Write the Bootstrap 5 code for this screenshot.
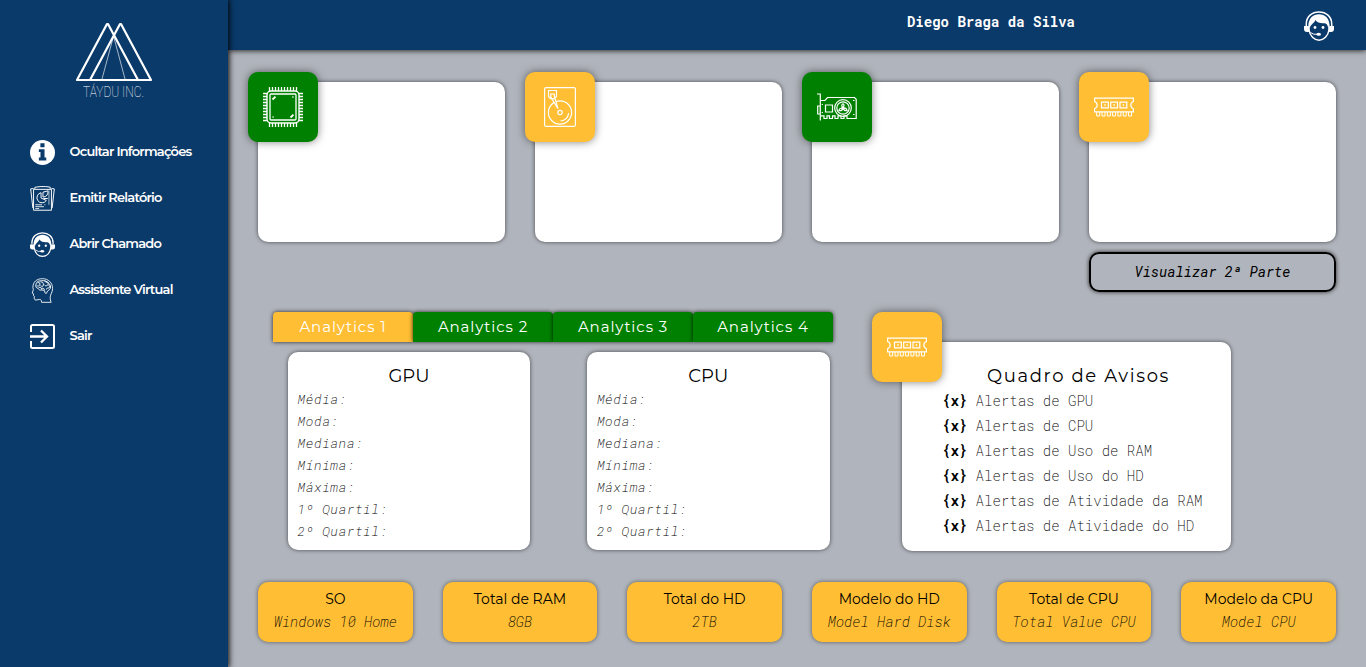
<!DOCTYPE html>
<html lang="pt-BR">
<head>
<meta charset="utf-8">
<meta name="viewport" content="width=device-width, initial-scale=1">
<title>Táydu Inc.</title>
<link href="https://cdn.jsdelivr.net/npm/bootstrap@5.3.0/dist/css/bootstrap.min.css" rel="stylesheet">
<style>
:root{--navy:#0a3a6a;--amber:#ffbe33;--leaf:#008000}
body{background:#b0b4bc;color:#000;font-family:"Montserrat","Inter",sans-serif;height:667px;overflow:hidden}
svg{display:block;fill:none;stroke:currentColor;overflow:visible}
.mono{font-family:"Roboto Mono","Liberation Mono",monospace}
.side{width:228px;background:var(--navy);box-shadow:0 0 6px 1px #000;z-index:3}
.brand{height:129px;padding-top:20px;color:#fff}
.side .nav-link{height:46px;padding:1px 0 0 30px;gap:14.5px;color:#fff;font-size:13px;font-weight:600;letter-spacing:-.8px}
.side .nav-link span{padding-bottom:2px}
.topbar{height:50px;background:var(--navy);box-shadow:0 0 6px #000;padding:2px 32px 0 0;z-index:2}
.user{font-size:14px;font-weight:700;margin-right:229px;margin-top:-9px}
.board{padding:32px 30px 0}
.panel{background:#fff;border-radius:10px;box-shadow:0 0 4px rgba(0,0,0,.6)}
.metric{height:160px}
.chip{width:70px;height:70px;border-radius:10px;color:#fff;box-shadow:0 0 8px rgba(0,0,0,.5);top:-10px;left:-10px}
.bg-amber{background:var(--amber)}.bg-leaf{background:var(--leaf)}
.four{display:grid;grid-template-columns:repeat(4,1fr);gap:10px 30px}
.more{grid-column:4;height:40px;border:2px solid #000;border-radius:10px;font-size:14px;font-style:italic;box-shadow:0 0 4px rgba(0,0,0,.8);padding:0 0 2px;background:none;color:#000}
.middle{height:240px;margin-top:20px}
.analytics{width:560px;margin-left:15px}
.tab{width:140px;height:30px;border:0;border-radius:4px 4px 0 0;color:#fff;font-size:15px;letter-spacing:.9px;box-shadow:0 0 4px rgba(0,0,0,.8);padding:0}
.stat-row{padding:10px 3.4px 0 14.6px}
.stats{width:242.7px;height:198px;padding:11px 10px 0}
.panel h2{font-size:18px;line-height:26px;margin:0;font-weight:400;text-align:center}
.panel ul{margin-top:-1px}
.stats li{font-size:13px;letter-spacing:.56px;line-height:22px;font-style:italic;font-weight:200}
.notice{width:329px;height:209px;margin:30px 0 0 69px;padding-top:21px}
.notice h2{letter-spacing:1.65px;padding-left:24px}
.notice .chip{top:-30px;left:-30px}
.notice ul{padding-left:40px}
.notice li{font-size:14px;line-height:25px;font-weight:200;white-space:pre}
.notice b{font-weight:700}
.specs{display:grid;grid-template-columns:repeat(6,1fr);gap:30px;margin-top:30px}
.spec{height:60px;background:var(--amber);border-radius:10px;box-shadow:0 0 4px rgba(0,0,0,.5);text-align:center;padding-top:6px}
.spec h3{font-size:14px;line-height:22px;font-weight:400;margin:0 0 1px}
.spec p{font-size:14px;line-height:22px;font-style:italic;font-weight:200;margin:0}
</style>
</head>
<body class="d-flex">
<svg width="0" height="0" class="position-absolute">
<defs>
<symbol id="agent" viewBox="0 0 30 30"><path d="M2.300 15V13C2.300 5.500 8 .9 15 .9s12.700 4.600 12.700 12.100v2" stroke-width="1.500"/><path d="M4.300 15.500C4.300 7.500 9 3.300 15 3.300S25.700 7.500 25.700 15.500l-1.700.5c-.5-2.500-1.800-3.800-3.600-3.800-3.400.3-7.400-.2-9-3.200C10.500 12 7 13 6 16.500z" fill="currentColor" stroke="none"/><path d="M0 15h4.500l1.300 1v5H3Q0 21 0 18zM30 15h-4.500l-1.300 1v5H27q3 0 3-3z" fill="currentColor" stroke="none"/><path d="M5 19c1 6 5 10.200 10 10.200s9-4.200 10-10.200" stroke-width="1.500"/><path d="M6.500 21.500q3 2.500 7 1.800" stroke-width="1"/><ellipse cx="14.700" cy="23.200" rx="2.300" ry="1.500" fill="currentColor" stroke="none"/><circle cx="11" cy="16.500" r="1.400" fill="currentColor" stroke="none"/><circle cx="19" cy="16.500" r="1.400" fill="currentColor" stroke="none"/></symbol>
<symbol id="ram" viewBox="0 0 40 20"><path d="M.6 1.100h38.800v3.400a3.800 3.800 0 0 0 0 7.200v3.200H.6v-3.200a3.800 3.800 0 0 0 0-7.200z" stroke-width="1.200"/><path d="M7.500 5.200h6.800v5.600H7.500zM16.700 5.200h6.800v5.600h-6.800zM26 5.200h6.800v5.600H26z" stroke-width="1.200"/><path d="M10.200 8h1.500M19.400 8h1.500M28.700 8h1.500" stroke-width="1.500"/><path d="M2.700 15v4h3v-4m2.300 0v4h3v-4m2.300 0v4h3v-4m2.300 0v4h3v-4m2.300 0v4h3v-4m2.300 0v4h3v-4m2.300 0v4h3v-4" stroke-width="1"/></symbol>
</defs>
</svg>

<aside class="side vh-100 flex-shrink-0 position-relative">
<div class="brand">
<svg width="80" height="82" viewBox="0 0 80 82" class="mx-auto" stroke-linejoin="round">
<path d="M33 4L3 60H64L34 4zM46 4L16 60H77L47 4z" stroke-width="2.200"/><path d="M39.300 17L28 59M39.800 17L51 59" stroke-width=".8" opacity=".8"/>
<text x="9" y="77" textLength="61" lengthAdjust="spacingAndGlyphs" fill="#fff" stroke="none" font-family="Roboto" font-weight="100" font-size="14.500">TÁYDU INC.</text>
</svg>
</div>
<nav class="nav flex-column flex-nowrap">
<a class="nav-link d-flex align-items-center" href="#"><svg width="25" height="25" viewBox="0 0 26 26"><circle cx="13" cy="13" r="13" fill="#fff" stroke="none"/><path d="M10.800 3.500h4.300v4h-4.300zM9.200 9.500h5.900v8.700h1.800v3H9.200v-3h1.700v-5.700H9.200z" fill="#0a3a6a" stroke="none"/></svg><span>Ocultar Informações</span></a>
<a class="nav-link d-flex align-items-center" href="#"><svg width="25" height="25" viewBox="0 1 26 26"><path d="M3.700 4.500h18.600v21.700H3.700zM3 24L.7 4l3-.4M23 24l2.300-20-3-.4M5 4V2.400l5.500-.8h6l4.500.6V4" stroke-width="1"/><path d="M11.500 8a5.300 5.300 0 1 0 5.500 8l-5.500-2.500zM13.500 7.500l5-1.500a5 5 0 0 1-5 6.500zM14 14h4.500" stroke-width="1"/><path d="M5.500 20.500h7M15 20.500h1M5.500 22.500h9M5.500 24.500h4" stroke-width=".9"/><path d="M19.700 5.500v15" stroke-width=".7"/></svg><span>Emitir Relatório</span></a>
<a class="nav-link d-flex align-items-center" href="#"><svg width="25" height="25"><use href="#agent"/></svg><span>Abrir Chamado</span></a>
<a class="nav-link d-flex align-items-center" href="#"><svg width="25" height="25" viewBox="0 0 26 26"><path d="M3 10C3 4 7 .7 13 .7S23.500 5 23.500 11c0 4-2.500 6-2.500 9 0 2 .2 3.500 1 5.300h-10c0-2-.5-3-2-3l-4.500.7-1.200-2 .2-2-1-1 .3-1.500-1.500-.8L3.500 12z" stroke-width=".9"/><path d="M6 8c0-3 2-5 4.500-5S15 2 18 4s4 5 3 7-3 2-3.500 4-2 1-2-.5-2-2-3-2S10 13 9 11.500 6 11 6 8zM8 5c2-1 3 1 2 2.500S7 8 7 8m4-4c2 0 3 1 3 3s-2 2-3 1m4-5c1 2 4 1 4 3s-3 3-4 1m4 0c1 1 2 2 1 3s-3 0-3 2m-8-2c2-1 3 0 3 2m0-1c2-1 3 0 3 2" stroke-width="1"/></svg><span>Assistente Virtual</span></a>
<a class="nav-link d-flex align-items-center" href="#"><svg width="25" height="25" viewBox="0 0 25 25" stroke-width="2"><path d="M1 8V2.500Q1 1 2.500 1h20Q24 1 24 2.500v20q0 1.500-1.500 1.500h-20Q1 24 1 22.500V17"/><path d="M0 12.500h17M11 6.500l6 6-6 6" stroke-width="2.300"/></svg><span>Sair</span></a>
</nav>
</aside>

<div class="flex-grow-1">
<header class="topbar d-flex align-items-center justify-content-end text-white position-relative">
<span class="user mono">Diego Braga da Silva</span>
<svg width="30" height="30"><use href="#agent"/></svg>
</header>
<main class="board">
<section class="four">
<div class="panel metric position-relative"><div class="chip bg-leaf position-absolute d-flex align-items-center justify-content-center"><svg width="40" height="40" viewBox="0 0 40 40"><rect x="4" y="4" width="32" height="32" rx="4" stroke-width="1.400"/><rect x="7" y="7" width="26" height="26" rx="1" stroke-width="1.300"/><path d="M6.500 0v4m3-4v4m3-4v4m3-4v4m3-4v4m3-4v4m3-4v4m3-4v4m3-4v4m3-4v4M6.500 36v4m3-4v4m3-4v4m3-4v4m3-4v4m3-4v4m3-4v4m3-4v4m3-4v4m3-4v4M0 6.500h4m-4 3h4m-4 3h4m-4 3h4m-4 3h4m-4 3h4m-4 3h4m-4 3h4m-4 3h4m-4 3h4M36 6.500h4m-4 3h4m-4 3h4m-4 3h4m-4 3h4m-4 3h4m-4 3h4m-4 3h4m-4 3h4m-4 3h4" stroke-width="1.300"/><path d="M9.500 12.500L12.500 9.700M27.500 30.500l3-2.800" stroke-width="1.800"/><path d="M29.300 10h1.200M9.500 30h1.200" stroke-width="1.300"/></svg></div></div>
<div class="panel metric position-relative"><div class="chip bg-amber position-absolute d-flex align-items-center justify-content-center"><svg width="32" height="40" viewBox="0 0 32 40" stroke-width="1.200"><rect x=".6" y=".6" width="30.800" height="38.800" rx="1.500"/><circle cx="16" cy="25.500" r="11.600"/><circle cx="16" cy="25.500" r="2.200"/><path d="M16.500 34q7-.5 8.200-8"/><path d="M4.500 3.500h8v6l-2 2.200h-4l-2-2.200zM6.800 9v-2h3.500v2L14 21.800 6.800 10z" fill="#ffbe33"/></svg></div></div>
<div class="panel metric position-relative"><div class="chip bg-leaf position-absolute d-flex align-items-center justify-content-center"><svg width="40" height="28" viewBox="0 0 40 28" stroke-width="1.200"><path d="M0 1h3.300v26.500M.7 13v8h2.500v-8zM3.500 7.500h4.500L10.500 4.500h27l1.700 1.800v19.200H30v-2.700h-3v2.700h-3v-2.700h-3v2.700h-3v-2.700h-2.500v2.700h-3v-2.700H10v2.700H7v-2.700H4"/><path d="M8.500 12h7v7h-7z"/><circle cx="26" cy="15" r="8.300"/><circle cx="26" cy="15" r="6.200"/><path d="M26 15q-2.500-3 0-4.300 2 1 0 4.300 3.500-.5 4 2.500-2.700 1-4-2.500-1 3.500-4 2.500 0-2.500 4-2.500z"/><circle cx="26" cy="15" r="1" fill="currentColor"/><path d="M36 7.500h1.500M36 21.500h1.500M5.300 11v1M5.300 19v1"/></svg></div></div>
<div class="panel metric position-relative"><div class="chip bg-amber position-absolute d-flex align-items-center justify-content-center"><svg width="40" height="20"><use href="#ram"/></svg></div></div>
<button class="more mono">Visualizar 2ª Parte</button>
</section>

<section class="middle d-flex">
<div class="analytics">
<div class="d-flex"><button class="tab bg-amber">Analytics 1</button><button class="tab bg-leaf">Analytics 2</button><button class="tab bg-leaf">Analytics 3</button><button class="tab bg-leaf">Analytics 4</button></div>
<div class="stat-row d-flex justify-content-between">
<div class="panel stats"><h2>GPU</h2><ul class="list-unstyled mono mb-0"><li>Média:</li><li>Moda:</li><li>Mediana:</li><li>Mínima:</li><li>Máxima:</li><li>1º Quartil:</li><li>2º Quartil:</li></ul></div>
<div class="panel stats"><h2>CPU</h2><ul class="list-unstyled mono mb-0"><li>Média:</li><li>Moda:</li><li>Mediana:</li><li>Mínima:</li><li>Máxima:</li><li>1º Quartil:</li><li>2º Quartil:</li></ul></div>
</div>
</div>
<div class="panel notice position-relative">
<div class="chip bg-amber position-absolute d-flex align-items-center justify-content-center"><svg width="40" height="20"><use href="#ram"/></svg></div>
<h2>Quadro de Avisos</h2>
<ul class="list-unstyled mono mb-0"><li><b>{x}</b> Alertas de GPU</li><li><b>{x}</b> Alertas de CPU</li><li><b>{x}</b> Alertas de Uso de RAM</li><li><b>{x}</b> Alertas de Uso do HD</li><li><b>{x}</b> Alertas de Atividade da RAM</li><li><b>{x}</b> Alertas de Atividade do HD</li></ul>
</div>
</section>

<section class="specs">
<div class="spec"><h3>SO</h3><p class="mono">Windows 10 Home</p></div>
<div class="spec"><h3>Total de RAM</h3><p class="mono">8GB</p></div>
<div class="spec"><h3>Total do HD</h3><p class="mono">2TB</p></div>
<div class="spec"><h3>Modelo do HD</h3><p class="mono">Model Hard Disk</p></div>
<div class="spec"><h3>Total de CPU</h3><p class="mono">Total Value CPU</p></div>
<div class="spec"><h3>Modelo da CPU</h3><p class="mono">Model CPU</p></div>
</section>
</main>
</div>
<script src="https://cdn.jsdelivr.net/npm/bootstrap@5.3.0/dist/js/bootstrap.bundle.min.js"></script>
</body>
</html>
